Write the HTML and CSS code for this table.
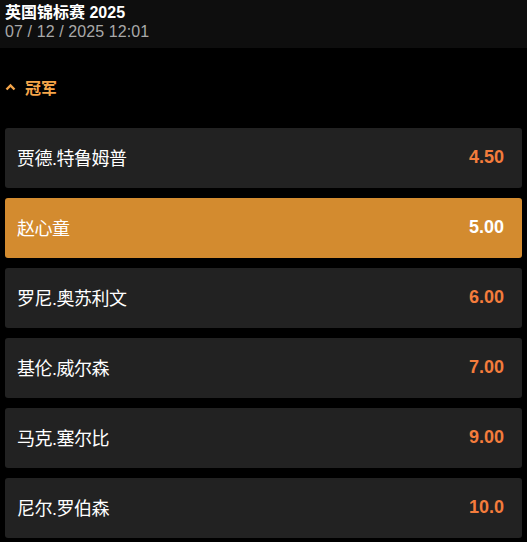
FILE: index.html
```html
<!DOCTYPE html>
<html lang="zh">
<head>
<meta charset="utf-8">
<link rel="stylesheet" href="styles.css">
</head>
<body>
<header class="top">
  <div class="title">英国锦标赛 2025</div>
  <div class="date">07 / 12 / 2025 12:01</div>
</header>
<section class="market">
  <div class="market-head">
    <svg class="chev" width="11" height="8" viewBox="0 0 11 8"><path d="M1.5 6.5 L5.5 2.5 L9.5 6.5" fill="none" stroke="#f5a54a" stroke-width="2.4"/></svg>
    <span>冠军</span>
  </div>
  <div class="rows">
    <div class="row"><span class="name">贾德.特鲁姆普</span><span class="odds">4.50</span></div>
    <div class="row sel"><span class="name">赵心童</span><span class="odds">5.00</span></div>
    <div class="row"><span class="name">罗尼.奥苏利文</span><span class="odds">6.00</span></div>
    <div class="row"><span class="name">基伦.威尔森</span><span class="odds">7.00</span></div>
    <div class="row"><span class="name">马克.塞尔比</span><span class="odds">9.00</span></div>
    <div class="row"><span class="name">尼尔.罗伯森</span><span class="odds">10.0</span></div>
  </div>
</section>
</body>
</html>
```
FILE: styles.css
```css
html, body { margin: 0; padding: 0; background: #000; }
body { font-family: "Liberation Sans", Arial, "Noto Sans CJK SC", sans-serif; color: #fff; }
.top { background: #0e0e0e; padding: 3px 5px 6px; height: 39px; }
.title { font-size: 16px; font-weight: bold; line-height: 19px; }
.date { font-size: 16px; color: #a9a9a9; line-height: 20px; letter-spacing: 0.1px; }
.market-head { display: flex; align-items: center; gap: 9px; padding: 0 5px; height: 32px; margin-top: 23px; color: #f5a54a; font-size: 16px; font-weight: bold; }
.chev { display: block; }
.rows { display: flex; flex-direction: column; gap: 10px; padding: 25px 5px 0; }
.row { height: 60px; box-sizing: border-box; padding: 0 18px 2px 12px; background: #222; border-radius: 3px; display: flex; align-items: center; justify-content: space-between; }
.name { font-size: 18px; letter-spacing: -0.5px; }
.odds { font-size: 18px; font-weight: bold; color: #f47c3c; }
.row.sel { background: #d38b2f; }
.row.sel .odds { color: #fff; }
```
